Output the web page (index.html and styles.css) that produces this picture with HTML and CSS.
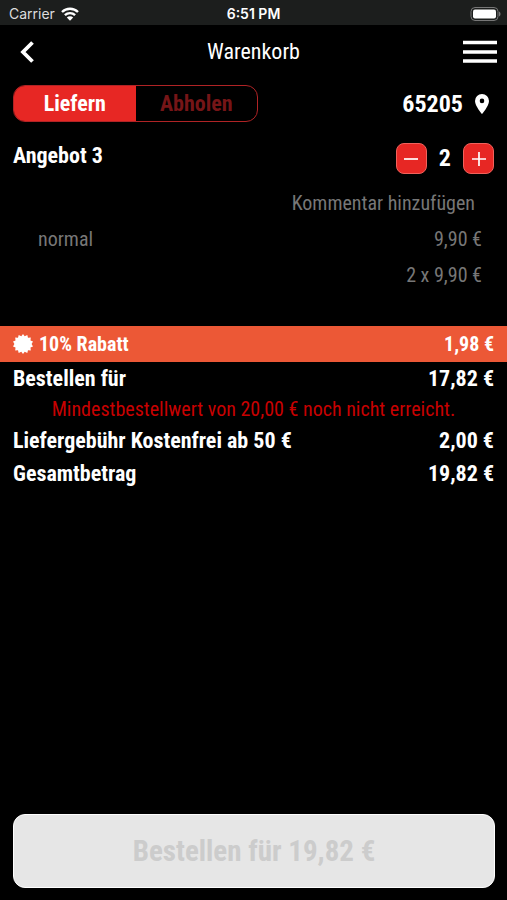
FILE: index.html
```html
<!DOCTYPE html>
<html lang="de">
<head>
<meta charset="utf-8">
<meta name="viewport" content="width=device-width, initial-scale=1">
<title>Warenkorb</title>
<link rel="stylesheet" href="styles.css">
</head>
<body>

<div class="status">
<div class="carrier">
<span>Carrier</span>
<svg width="18" height="14" viewBox="0 0 18 14"><path d="M1 5a11.500 11.500 0 0 1 16 0M3.900 8.200a7.300 7.300 0 0 1 10.200 0" fill="none" stroke="#fff" stroke-width="2.400"/><path d="M9 13.800L5.800 10.600a4.500 4.500 0 0 1 6.400 0z" fill="#fff"/></svg>
</div>
<div class="clock">6:51 PM</div>
<div class="battery">
<svg width="31" height="14" viewBox="0 0 31 14"><rect x="1" y=".5" width="27" height="13" rx="4" fill="#1c1e1d" stroke="#777" stroke-width="1"/><rect x="3" y="2.500" width="23" height="9" rx="2" fill="#fff"/><path d="M29 4.500c2 .8 2 4.200 0 5z" fill="#777"/></svg>
</div>
</div>

<header class="nav">
<button type="button" class="nav_btn" aria-label="Zurück">
<svg width="14" height="22" viewBox="0 0 14 22"><path d="M12.500 1.500L3 11l9.500 9.500" fill="none" stroke="#fff" stroke-width="3.800"/></svg>
</button>
<h1>Warenkorb</h1>
<button type="button" class="nav_btn nav_menu" aria-label="Menü">
<svg width="34" height="24" viewBox="0 0 34 24"><path d="M0 2.500h34M0 12h34M0 21h34" stroke="#fff" stroke-width="3.600"/></svg>
</button>
</header>

<main class="cart">
<div class="row mode">
<div class="toggle">
<button type="button" class="active" aria-pressed="true">Liefern</button>
<button type="button" aria-pressed="false">Abholen</button>
</div>
<button type="button" class="zip">65205
<svg width="14" height="20" viewBox="0 0 14 20"><path fill="#fff" fill-rule="evenodd" d="M7 0a7 7 0 0 0-7 7c0 5 7 13 7 13s7-8 7-13a7 7 0 0 0-7-7zm0 4.600a2.300 2.300 0 1 1 0 4.600 2.300 2.300 0 0 1 0-4.600z"/></svg>
</button>
</div>

<section class="item">
<div class="row item_head">
<h2>Angebot 3</h2>
<div class="qty">
<button type="button" aria-label="Weniger"><svg width="14" height="14" viewBox="0 0 14 14"><path d="M0 7h14" stroke="#fff" stroke-width="1.700"/></svg></button>
<span>2</span>
<button type="button" aria-label="Mehr"><svg width="14" height="14" viewBox="0 0 14 14"><path d="M0 7h14M7 0v14" stroke="#fff" stroke-width="1.700"/></svg></button>
</div>
</div>
<button type="button" class="comment">Kommentar hinzufügen</button>
<div class="row detail"><span>normal</span><span>9,90 €</span></div>
<div class="row detail"><span></span><span>2 x 9,90 €</span></div>
</section>

<section class="sums">
<div class="row discount">
<span class="discount_name">
<svg width="20" height="20" viewBox="-10 -10 20 20"><path fill="#fff" d="M0-10l1.700 2.200L4.300-9l.7 2.700 2.800-.1-.3 2.800 2.500 1L8.600 0 10 2.600 7.500 3.600 7.800 6.400 5 6.300 4.300 9 1.700 7.800 0 10-1.700 7.800-4.300 9-5 6.300-7.800 6.400-7.500 3.600-10 2.600-8.600 0-10-2.600-7.500-3.600-7.800-6.400-5-6.300-4.300-9-1.700-7.800z"/></svg>
10% Rabatt</span>
<span>1,98 €</span>
</div>
<div class="row sum"><span>Bestellen für</span><span>17,82 €</span></div>
<p class="warn">Mindestbestellwert von 20,00 € noch nicht erreicht.</p>
<div class="row sum"><span>Liefergebühr Kostenfrei ab 50 €</span><span>2,00 €</span></div>
<div class="row sum"><span>Gesamtbetrag</span><span>19,82 €</span></div>
</section>
</main>

<footer class="foot">
<button type="button" class="order" disabled>Bestellen für 19,82 €</button>
</footer>

</body>
</html>
```
FILE: styles.css
```css
* {box-sizing:border-box;}
body {margin:0;min-height:100vh;display:flex;flex-direction:column;background:#000;color:#fff;font-family:"Roboto Condensed","Liberation Sans Narrow",Roboto,sans-serif;font-size:22px;}
h1, h2, p {margin:0;}
button {margin:0;padding:0;border:none;background:none;color:inherit;font:inherit;cursor:pointer;}
svg {display:block;flex:none;}

.status {display:grid;grid-template-columns:1fr auto 1fr;align-items:center;height:25px;padding:2px 6px 0;background:#1c1e1d;font-family:Inter,sans-serif;font-size:14px;}
.carrier {display:flex;align-items:center;gap:6px;padding-left:3px;color:#ddd;}
.clock {font-weight:600;}
.battery {justify-self:end;}

.nav {display:grid;grid-template-columns:1fr auto 1fr;align-items:center;height:53px;padding:0 10px;}
.nav h1 {font-size:22px;font-weight:400;}
.nav_btn {justify-self:start;padding-left:10px;}
.nav_menu {justify-self:end;}

.cart {flex:1;}
.row {display:flex;justify-content:space-between;align-items:center;padding:0 13px;}

.mode {padding-top:7px;}
.toggle {display:flex;width:245px;height:37px;border:1px solid #b02325;border-radius:12px;overflow:hidden;font-weight:700;color:#761517;}
.toggle button {flex:1;}
.toggle .active {background:#e72724;color:#fff;}
.zip {display:flex;align-items:center;gap:12px;padding-right:5px;font-size:24px;font-weight:700;}

.item {padding-bottom:33px;}
.item_head {align-items:flex-start;padding-top:21px;}
.item_head h2 {font-size:22px;line-height:26px;font-weight:700;}
.qty {display:flex;align-items:center;gap:12px;font-size:24px;font-weight:700;line-height:31px;}
.qty button {display:grid;place-items:center;width:31px;height:31px;border:1px solid #f0625c;border-radius:8px;background:#e72724;}
.comment {display:block;margin:11px 32px 0 auto;line-height:36px;font-size:20px;color:#777;}
.detail {padding:0 25px 0 38px;line-height:36px;font-size:20px;color:#777;}

.discount {height:36px;background:#ec5836;font-size:20px;font-weight:700;}
.discount_name {display:flex;align-items:center;gap:6px;}
.sum {line-height:33px;font-weight:700;}
.warn {text-align:center;line-height:29px;font-size:20px;color:#c80000;}

.foot {padding:0 12px 12px 13px;}
.order {width:100%;height:74px;border:1px solid #fff;border-radius:12px;background:#e6e6e6;color:#ccc;font-size:29px;font-weight:700;cursor:default;}
```
